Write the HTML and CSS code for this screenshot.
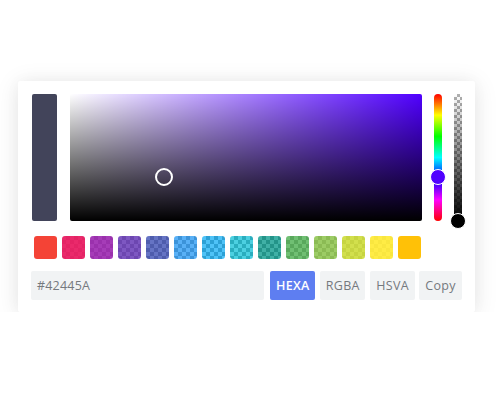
FILE: index.html
```html
<!DOCTYPE html>
<html>
<head>
<meta charset="utf-8">
<link rel="stylesheet" href="styles.css">
</head>
<body>
<div class="pcr-app">
  <div class="selection">
    <div class="preview"></div>
    <div class="palette">
      <div class="cursor"></div>
    </div>
    <div class="hue">
      <div class="hue-handle"></div>
    </div>
    <div class="opacity">
      <div class="op-handle"></div>
    </div>
  </div>
  <div class="swatches">
    <span class="swatch" style="--c: rgba(244, 67, 54, 1)"></span>
    <span class="swatch" style="--c: rgba(233, 30, 99, 0.95)"></span>
    <span class="swatch" style="--c: rgba(156, 39, 176, 0.9)"></span>
    <span class="swatch" style="--c: rgba(103, 58, 183, 0.85)"></span>
    <span class="swatch" style="--c: rgba(63, 81, 181, 0.8)"></span>
    <span class="swatch" style="--c: rgba(33, 150, 243, 0.75)"></span>
    <span class="swatch" style="--c: rgba(3, 169, 244, 0.7)"></span>
    <span class="swatch" style="--c: rgba(0, 188, 212, 0.7)"></span>
    <span class="swatch" style="--c: rgba(0, 150, 136, 0.75)"></span>
    <span class="swatch" style="--c: rgba(76, 175, 80, 0.8)"></span>
    <span class="swatch" style="--c: rgba(139, 195, 74, 0.85)"></span>
    <span class="swatch" style="--c: rgba(205, 220, 57, 0.9)"></span>
    <span class="swatch" style="--c: rgba(255, 235, 59, 0.95)"></span>
    <span class="swatch" style="--c: rgba(255, 193, 7, 1)"></span>
  </div>
  <div class="interaction">
    <div class="result">#42445A</div>
    <div class="btn active">HEXA</div>
    <div class="btn">RGBA</div>
    <div class="btn">HSVA</div>
    <div class="btn copy">Copy</div>
  </div>
</div>
</body>
</html>
```
FILE: styles.css
```css
* { box-sizing: border-box; }
html, body { margin: 0; padding: 0; background: #fff; }
body { font-family: "Open Sans", "Noto Sans", sans-serif; }

.pcr-app {
  margin: 81px 0 0 18px;
  width: 457px;
  height: 231px;
  padding: 13px 13px 12px 14px;
  background: #fff;
  border-radius: 2px;
  box-shadow: 0 3px 24px rgba(0, 0, 0, 0.1), 0 0 16px rgba(0, 0, 0, 0.03);
  display: flex;
  flex-direction: column;
}

.selection {
  display: flex;
  height: 127px;
}
.preview {
  width: 25px;
  background: #42445A;
  border-radius: 2px;
}
.palette {
  position: relative;
  width: 352px;
  margin-left: 13px;
  border-radius: 2px;
  background:
    linear-gradient(to top, #000, rgba(0, 0, 0, 0)),
    linear-gradient(to right, #fff, rgba(255, 255, 255, 0)),
    #5000ff;
}
.cursor {
  position: absolute;
  left: 85px;
  top: 74px;
  width: 18px;
  height: 18px;
  border: 2px solid #fff;
  border-radius: 50%;
}
.hue {
  position: relative;
  width: 8px;
  margin-left: 12px;
  border-radius: 4px;
  background: linear-gradient(to bottom, #f00 0%, #ff0 16.66%, #0f0 33.33%, #0ff 50%, #00f 66.66%, #f0f 83.33%, #f00 100%);
}
.hue-handle {
  position: absolute;
  left: -4px;
  top: 75px;
  width: 16px;
  height: 16px;
  border-radius: 50%;
  border: 1.5px solid #fff;
  background: #5000ff;
}
.opacity {
  position: relative;
  width: 8px;
  margin-left: 12px;
  background:
    linear-gradient(to bottom, rgba(0, 0, 0, 0), #000),
    repeating-conic-gradient(#b0b0b0 0 25%, #fff 0 50%) 0 0 / 6px 6px;
}
.op-handle {
  position: absolute;
  left: -4px;
  bottom: -8px;
  width: 16px;
  height: 16px;
  border-radius: 50%;
  border: 1.5px solid #fff;
  background: #000;
}

.swatches {
  display: flex;
  gap: 5px;
  margin-top: 15px;
  padding-left: 2px;
  height: 23px;
}
.swatch {
  width: 23px;
  height: 23px;
  border-radius: 3px;
  background:
    linear-gradient(var(--c), var(--c)),
    repeating-conic-gradient(#8c8c8c 0 25%, #fff 0 50%) 0 0 / 8px 8px;
}

.interaction {
  display: flex;
  margin-top: 12px;
  height: 29px;
  margin-left: -1px;
}
.result {
  width: 234px;
  background: #f1f3f4;
  color: #75797e;
  font-size: 12.5px;
  line-height: 29px;
  padding-left: 6px;
  border-radius: 2px;
  letter-spacing: 0.2px;
}
.btn {
  width: 45px;
  margin-left: 5px;
  background: #f1f3f4;
  color: #75797e;
  font-size: 12.5px;
  line-height: 29px;
  text-align: center;
  border-radius: 2px;
  letter-spacing: 0.3px;
}
.btn.active {
  margin-left: 6px;
  background: #5e7ef1;
  color: #fff;
  font-weight: 600;
}
.btn.copy {
  width: 43px;
  margin-left: 4px;
}
```
